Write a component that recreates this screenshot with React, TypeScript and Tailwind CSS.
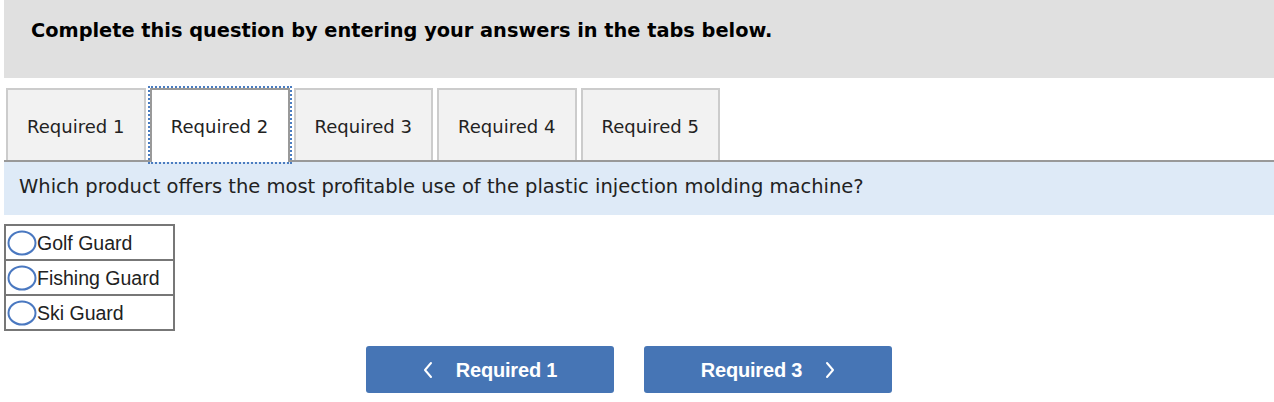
import React from 'react'

const tabs = ['Required 1', 'Required 2', 'Required 3', 'Required 4', 'Required 5']
const options = ['Golf Guard', 'Fishing Guard', 'Ski Guard']

function Chevron({ dir }: { dir: 'left' | 'right' }) {
  return (
    <svg width="10" height="18" viewBox="0 0 10 18" fill="none">
      <path
        d={dir === 'left' ? 'M8 2 L2 9 L8 16' : 'M2 2 L8 9 L2 16'}
        stroke="white"
        strokeWidth="2"
        strokeLinecap="round"
        strokeLinejoin="round"
      />
    </svg>
  )
}

export default function App() {
  const active = 1
  return (
    <div className="w-[1274px] h-[402px] bg-white pl-[4px] overflow-hidden" style={{ fontFamily: '"DejaVu Sans", Verdana, sans-serif' }}>
      <div className="h-[78px] bg-[#e0e0e0] pl-[27px] pt-[20px]">
        <p className="text-[19.35px] leading-[22px] font-bold text-black">
          Complete this question by entering your answers in the tabs below.
        </p>
      </div>

      <div className="mt-[10px] flex gap-[4px] pl-[2px] border-b-2 border-[#999]">
        {tabs.map((t, i) =>
          i === active ? (
            <div
              key={t}
              className="w-[140px] h-[74px] -mb-[2px] flex items-center justify-center bg-white border-2 border-b-0 border-[#999] outline-2 outline-dotted outline-[#4a7cc0] text-[18px] text-[#222]"
            >
              <span>{t}</span>
            </div>
          ) : (
            <div
              key={t}
              className="w-[139.5px] h-[72px] flex items-center justify-center bg-[#f2f2f2] border-2 border-b-0 border-[#ccc] text-[18px] text-[#222]"
            >
              <span className="mt-[2px]">{t}</span>
            </div>
          )
        )}
      </div>

      <div className="h-[53px] bg-[#deeaf7] pl-[15px] pt-[14px]">
        <p className="text-[19.5px] leading-[22px] text-[#222]">
          Which product offers the most profitable use of the plastic injection molding machine?
        </p>
      </div>

      <table className="mt-[9px] w-[171px] border-collapse border-2 border-[#777]" style={{ fontFamily: '"Liberation Sans", Arial, sans-serif' }}>
        <tbody>
          {options.map((o) => (
            <tr key={o} className="border-2 border-[#777]">
              <td className="h-[35px] p-0">
                <div className="flex items-center">
                  <svg width="30" height="26" viewBox="0 0 30 26" className="ml-[1px] shrink-0">
                    <ellipse cx="15" cy="13" rx="13.5" ry="11.5" fill="white" stroke="#4a78c0" strokeWidth="2" />
                  </svg>
                  <span className="text-[19.5px] leading-[22px] text-[#222]">{o}</span>
                </div>
              </td>
            </tr>
          ))}
        </tbody>
      </table>

      <div className="mt-[15px] flex justify-center gap-[30px] pr-[20px]" style={{ fontFamily: '"Liberation Sans", Arial, sans-serif' }}>
        <button className="w-[248px] h-[47px] rounded-[3px] bg-[#4675b5] flex items-center justify-center gap-[23px] text-white font-bold text-[20px]">
          <Chevron dir="left" />
          <span className="tracking-[-0.2px]">Required 1</span>
        </button>
        <button className="w-[248px] h-[47px] rounded-[3px] bg-[#4675b5] flex items-center justify-center gap-[23px] text-white font-bold text-[20px]">
          <span className="tracking-[-0.2px]">Required 3</span>
          <Chevron dir="right" />
        </button>
      </div>
    </div>
  )
}
